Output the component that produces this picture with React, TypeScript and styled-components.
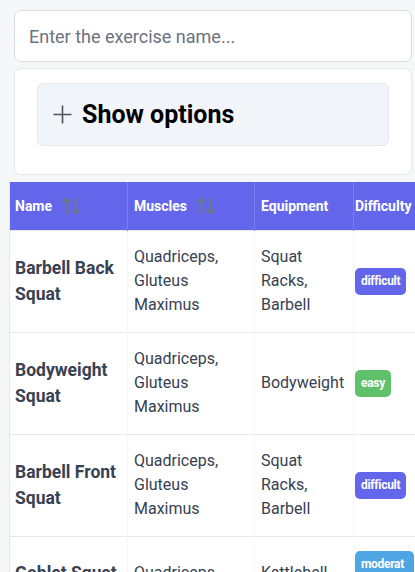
import React from 'react';
import styled, {createGlobalStyle} from "styled-components";
import {ArrowUpDown} from "lucide-react";

type DifficultyType = 'easy' | 'moderate' | 'difficult';

type ExerciseType = {
  id: number
  name: string
  muscles: string
  equipment: string
  difficulty: DifficultyType
}

const exercises: Array<ExerciseType> = [
  {id: 1, name: 'Barbell Back Squat', muscles: 'Quadriceps, Gluteus Maximus', equipment: 'Squat Racks, Barbell', difficulty: 'difficult'},
  {id: 2, name: 'Bodyweight Squat', muscles: 'Quadriceps, Gluteus Maximus', equipment: 'Bodyweight', difficulty: 'easy'},
  {id: 3, name: 'Barbell Front Squat', muscles: 'Quadriceps, Gluteus Maximus', equipment: 'Squat Racks, Barbell', difficulty: 'difficult'},
  {id: 4, name: 'Goblet Squat', muscles: 'Quadriceps', equipment: 'Kettlebell', difficulty: 'moderate'},
]

const badgeColors: Record<DifficultyType, string> = {
  easy: '#5fc26b',
  moderate: '#4ea5e3',
  difficult: '#6366ea',
}

export default function App() {
  const rows = exercises.map((e) => (
    <tr key={e.id}>
      <NameCell>{e.name}</NameCell>
      <Cell>{e.muscles}</Cell>
      <Cell>{e.equipment}</Cell>
      <BadgeCell>
        <Badge $level={e.difficulty}>{e.difficulty}</Badge>
      </BadgeCell>
    </tr>
  ))

  return (
    <>
      <GlobalStyle/>
      <Page>
        <Controls>
          <SearchInput placeholder="Enter the exercise name..."/>
          <OptionsCard>
            <OptionsButton>
              <svg width="19" height="19" viewBox="0 0 19 19" fill="none" stroke="#4b5563" strokeWidth="1.6">
                <path d="M0.5 9.5h18M9.5 0.5v18"/>
              </svg>
              <span>Show options</span>
            </OptionsButton>
          </OptionsCard>
        </Controls>
        <Table>
          <colgroup>
            <col style={{width: 118}}/>
            <col style={{width: 127}}/>
            <col style={{width: 99}}/>
            <col style={{width: 66}}/>
          </colgroup>
          <thead>
          <tr>
            <HeadCell>
              <HeadInner>Name <ArrowUpDown size={22} color="#6f7a86" strokeWidth={2}/></HeadInner>
            </HeadCell>
            <HeadCell>
              <HeadInner>Muscles <ArrowUpDown size={22} color="#6f7a86" strokeWidth={2}/></HeadInner>
            </HeadCell>
            <HeadCell>Equipment</HeadCell>
            <LastHeadCell>Difficulty</LastHeadCell>
          </tr>
          </thead>
          <tbody>
          {rows}
          </tbody>
        </Table>
      </Page>
    </>
  );
}

const GlobalStyle = createGlobalStyle`
    body {
        margin: 0;
        background: #f6f7f9;
        font-family: Roboto, "Liberation Sans", sans-serif;
        overflow-x: hidden;
    }
`

const Page = styled.div`
    padding-top: 10px;
`

const Controls = styled.div`
    display: flex;
    flex-direction: column;
    gap: 6px;
    width: 398px;
    margin-left: 14px;
`

const SearchInput = styled.input`
    box-sizing: border-box;
    height: 52px;
    width: 100%;
    padding: 0 14px;
    border: 1px solid #d9dce4;
    border-radius: 7px;
    background: #fff;
    font-family: Roboto, "Liberation Sans", sans-serif;
    font-size: 18px;
    color: #374151;
    outline: none;

    &::placeholder {
        color: #6b7280;
    }
`

const OptionsCard = styled.div`
    box-sizing: border-box;
    height: 107px;
    padding: 14px 22px;
    border: 1px solid #e4e7ec;
    border-radius: 7px;
    background: #fff;
`

const OptionsButton = styled.div`
    box-sizing: border-box;
    display: flex;
    align-items: center;
    gap: 10px;
    height: 63px;
    padding: 0 15px;
    border: 1px solid #e5e8ee;
    border-radius: 6px;
    background: #f1f4f8;
    font-size: 25px;
    font-weight: 700;
    color: #000;
`

const Table = styled.table`
    table-layout: fixed;
    width: 410px;
    margin: 7px 0 0 9px;
    border-collapse: collapse;
    border-left: 1px solid #e5e7eb;
    background: #fff;
`

const HeadCell = styled.th`
    height: 48px;
    padding: 0 6px;
    background: #6366ea;
    border-left: 1px solid #7b7eef;
    text-align: left;
    font-size: 14px;
    font-weight: 700;
    color: #fff;
    white-space: nowrap;

    &:first-child {
        border-left: none;
        padding-left: 5px;
    }
`

const LastHeadCell = styled(HeadCell)`
    padding-left: 1px;
`

const HeadInner = styled.span`
    display: inline-flex;
    align-items: center;
    gap: 8px;
`

const Cell = styled.td`
    padding: 14px 6px 15px;
    border-top: 1px solid #e5e7eb;
    border-left: 1px solid #f6f7f8;
    vertical-align: middle;
    font-size: 16px;
    line-height: 24px;
    color: #374151;
`

const NameCell = styled(Cell)`
    padding-left: 5px;
    border-left: none;
    font-size: 17.5px;
    line-height: 26px;
    font-weight: 700;
`

const BadgeCell = styled(Cell)`
    padding-left: 1px;
    padding-right: 6px;
`

const Badge = styled.span<{ $level: DifficultyType }>`
    display: inline-block;
    padding: 5px 6px;
    border-radius: 5px;
    background: ${props => badgeColors[props.$level]};
    color: #fff;
    font-size: 12px;
    line-height: 17px;
    font-weight: 700;
    letter-spacing: -0.3px;
    word-break: break-all;
`
